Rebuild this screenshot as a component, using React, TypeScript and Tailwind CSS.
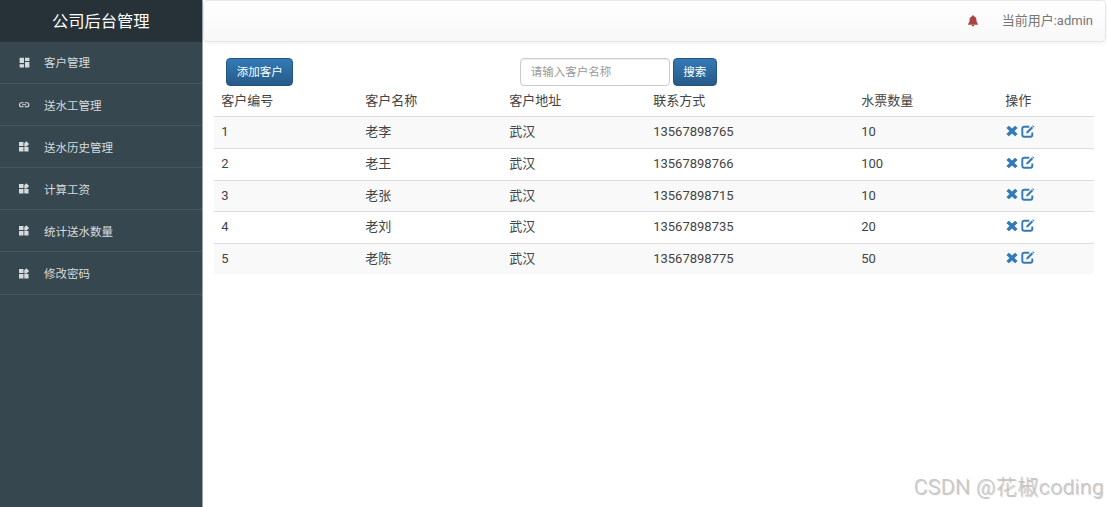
import type { ReactNode } from 'react';
import { MdDashboard } from 'react-icons/md';

interface Customer {
  id: number;
  name: string;
  address: string;
  phone: string;
  tickets: number;
}

const CUSTOMERS: Customer[] = [
  { id: 1, name: '老李', address: '武汉', phone: '13567898765', tickets: 10 },
  { id: 2, name: '老王', address: '武汉', phone: '13567898766', tickets: 100 },
  { id: 3, name: '老张', address: '武汉', phone: '13567898715', tickets: 10 },
  { id: 4, name: '老刘', address: '武汉', phone: '13567898735', tickets: 20 },
  { id: 5, name: '老陈', address: '武汉', phone: '13567898775', tickets: 50 },
];

function WidgetsIcon() {
  return (
    <svg viewBox="0 0 13 13" className="h-[13px] w-[13px] fill-current">
      <path d="M1 2h4.500v4H1zM1 7h4.500v4.500H1zM6.300 7h4.200v4.500H6.300zM8.300 1.200l2.800 2.900-2.400 2.300H6.300V3.300z" />
    </svg>
  );
}

function LinkIcon() {
  return (
    <svg viewBox="0 0 13 13" className="h-[13px] w-[13px]" fill="none" stroke="currentColor">
      <path
        d="M5.600 4.700H3.500a2 2 0 0 0 0 4h2.100M6.800 4.700h2.100a2 2 0 0 1 0 4H6.800M4.200 6.700h4"
        strokeWidth="1.100"
      />
    </svg>
  );
}

const MENU: { label: string; icon: ReactNode }[] = [
  { label: '客户管理', icon: <MdDashboard /> },
  { label: '送水工管理', icon: <LinkIcon /> },
  { label: '送水历史管理', icon: <WidgetsIcon /> },
  { label: '计算工资', icon: <WidgetsIcon /> },
  { label: '统计送水数量', icon: <WidgetsIcon /> },
  { label: '修改密码', icon: <WidgetsIcon /> },
];

const HEADERS = ['客户编号', '客户名称', '客户地址', '联系方式', '水票数量', '操作'];

const ROW = 'grid grid-cols-[144px_144px_144px_208px_144px_1fr] pr-[7px] pl-[7px]';

const BUTTON =
  'h-7 rounded border border-[#245580] bg-linear-to-b from-[#337ab7] to-[#265a88] text-[11.5px] leading-[25px] text-white';

function BellIcon() {
  return (
    <svg viewBox="0 0 10 12" className="h-3 w-2.5 fill-[#a94442]">
      <path d="M5 0.3c.6 0 .9.4.9.9 1.600.4 2.400 1.600 2.500 3.200.1 2 .4 3.400 1.500 4.400v.9H.1v-.9c1.100-1 1.400-2.400 1.500-4.400.1-1.600.9-2.800 2.500-3.200 0-.5.300-.9.900-.9zM3.700 10.100h2.600c0 .8-.5 1.400-1.300 1.400s-1.300-.6-1.300-1.400z" />
    </svg>
  );
}

function RemoveIcon() {
  return (
    <svg viewBox="0 0 12 12" className="h-3 w-3 fill-[#337ab7]">
      <path d="M2.900.7 6 3.600 9.100.7l2.500 2.400L8.500 6l3.100 2.900-2.500 2.400L6 8.400l-3.100 2.900L.4 8.900 3.500 6 .4 3.100z" />
    </svg>
  );
}

function EditIcon() {
  return (
    <svg viewBox="0 0 14 13" className="h-[13px] w-3.5" fill="none" stroke="#337ab7">
      <path
        d="M8.300 1.700H3.200C2 1.700 1.300 2.400 1.300 3.600v6.200c0 1.200.7 1.900 1.900 1.900h6.200c1.200 0 1.900-.7 1.900-1.900V7.600"
        strokeWidth="1.900"
      />
      <path d="M5.100 8.600 5.600 6.400 10.600 1.500l1.500 1.500-5 5z" fill="#337ab7" stroke="none" />
      <path d="M11.200.9 11.900.3l1.500 1.400-.7.7z" fill="#337ab7" stroke="none" />
    </svg>
  );
}

function Sidebar() {
  return (
    <aside className="h-full w-[202.5px] shrink-0 border-r border-[#9ba4a8] bg-[#37474f]">
      <h1 className="h-[42px] bg-[#263238] text-center text-[16.3px] leading-[43px] text-white">
        公司后台管理
      </h1>
      <nav>
        {MENU.map((item) => (
          <a
            key={item.label}
            className="flex h-[42.1px] items-center border-b border-[#455860] pl-[18px] text-[11.5px] text-[#d5dadc]"
          >
            <span className="mr-[13px] text-[13px]">{item.icon}</span>
            <span className="pt-[3px]">{item.label}</span>
          </a>
        ))}
      </nav>
    </aside>
  );
}

function Topbar() {
  return (
    <header className="flex h-[42px] items-center justify-end rounded border border-[#e7e7e7] bg-linear-to-b from-white to-[#f8f8f8] pr-3 text-[13px] text-[#777] shadow-[0_1px_4px_rgba(0,0,0,0.075)]">
      <BellIcon />
      <span className="ml-6">当前用户:admin</span>
    </header>
  );
}

function CustomerTable() {
  return (
    <div className="text-[13px] text-[#444]">
      <div className={`${ROW} h-[30.4px] leading-[30px]`}>
        {HEADERS.map((h) => (
          <span key={h}>{h}</span>
        ))}
      </div>
      {CUSTOMERS.map((c) => (
        <div
          key={c.id}
          className={`${ROW} h-[31.6px] border-t border-[#ddd] leading-[30px] odd:bg-white even:bg-[#f9f9f9]`}
        >
          <span>{c.id}</span>
          <span>{c.name}</span>
          <span>{c.address}</span>
          <span>{c.phone}</span>
          <span>{c.tickets}</span>
          <span className="flex items-center gap-[3px] pb-[3px] pl-px">
            <RemoveIcon />
            <EditIcon />
          </span>
        </div>
      ))}
    </div>
  );
}

export default function App() {
  return (
    <div className="relative flex h-[507px] w-[1107px] overflow-hidden bg-white font-[Roboto,'Noto_Sans_CJK_SC',sans-serif]">
      <Sidebar />
      <div className="min-w-0 flex-1 pr-px">
        <Topbar />
        <main className="pt-4 pr-3 pl-[11.7px]">
          <div className="flex h-7 pl-3">
            <button className={`${BUTTON} w-[67px]`}>添加客户</button>
            <input
              className="ml-[226.500px] h-7 w-[150px] rounded border border-[#ccc] px-2.5 text-[11.5px] shadow-[inset_0_1px_1px_rgba(0,0,0,0.075)] placeholder:text-[#999]"
              placeholder="请输入客户名称"
            />
            <button className={`${BUTTON} ml-[3px] w-11`}>搜索</button>
          </div>
          <CustomerTable />
        </main>
      </div>
      <div className="absolute right-[3px] bottom-[5px] text-[21px] leading-[30px] font-light tracking-[0.5px] whitespace-nowrap text-[#c8c8c8] [text-shadow:1px_1px_1px_#bbb]">
        CSDN @花椒coding
      </div>
    </div>
  );
}
